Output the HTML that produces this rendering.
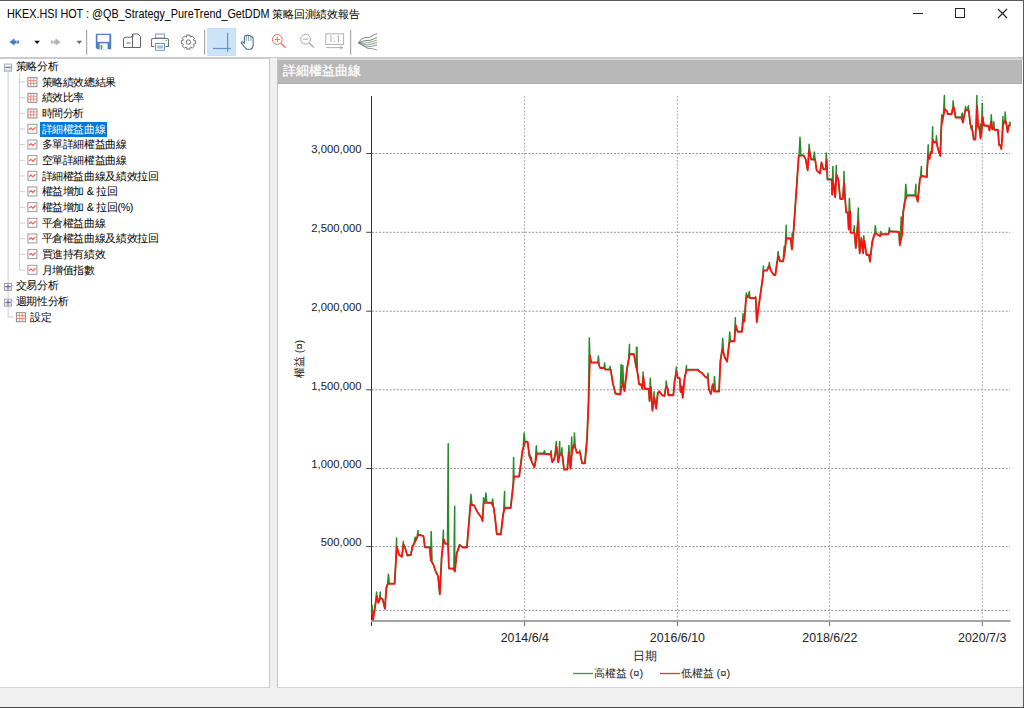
<!DOCTYPE html>
<html><head><meta charset="utf-8">
<style>
*{margin:0;padding:0;box-sizing:border-box}
html,body{width:1024px;height:708px;overflow:hidden;background:#fff;font-family:"Liberation Sans",sans-serif;color:#000}
.a{position:absolute}
#win{position:absolute;left:0;top:0;width:1024px;height:708px;background:#fff}
.title{left:7px;top:6.5px;font-size:12px;line-height:14px;white-space:nowrap;transform-origin:0 0;transform:scaleX(0.9);color:#000}
.tree{left:0;top:58px;width:270px;height:630px;border-right:1px solid #c8c8c8;background:#fff}
.ti{position:absolute;font-size:10.7px;letter-spacing:-0.35px;line-height:14px;white-space:nowrap;color:#000}
.sel{background:#0078d7;color:#fff;padding:0 1px}
.vl{position:absolute;width:0;border-left:1px dotted #a0a0a0}
.hl{position:absolute;height:0;border-top:1px dotted #a0a0a0}
.box{position:absolute;width:9px;height:9px;border:1px solid #9a9a9a;background:linear-gradient(#fff,#e0e0e0)}
.sep{position:absolute;width:1px;background:#a0a0a0}
.lbl{font-size:11.3px;line-height:14px;color:#222;white-space:nowrap;text-align:right}
.xlbl{font-size:12.4px;line-height:14px;color:#222;text-align:center;white-space:nowrap}
</style></head><body>
<div id="win">
<div class="a title">HKEX.HSI HOT : @QB_Strategy_PureTrend_GetDDM </div><div class="a" style="left:272px;top:6.5px;font-size:11px;line-height:14px;white-space:nowrap">策略回測績效報告</div>
<!-- window buttons -->
<svg class="a" style="left:0;top:0" width="1024" height="30">
<line x1="913" y1="13.5" x2="923" y2="13.5" stroke="#222" stroke-width="1"/>
<rect x="955.5" y="8.5" width="9" height="9" fill="none" stroke="#222" stroke-width="1"/>
<path d="M998 9 L1007 18 M1007 9 L998 18" stroke="#222" stroke-width="1.1"/>
</svg>

<!-- toolbar -->
<svg class="a" style="left:0;top:26px" width="400" height="32" viewBox="0 26 400 32">
<path d="M9.5 42 L14.5 38.3 L14.5 45.7 Z" fill="#4a7cc4"/>
<rect x="14" y="40.6" width="2.6" height="3" fill="#4a7cc4"/>
<rect x="17.2" y="40.6" width="1.8" height="3" fill="#4a7cc4"/>
<path d="M34.2 40.8 L40 40.8 L37.1 44 Z" fill="#111"/>
<rect x="51" y="40.6" width="1.8" height="3" fill="#b4b4b4"/>
<rect x="53.4" y="40.6" width="2.6" height="3" fill="#b4b4b4"/>
<path d="M60.6 42 L55.6 38.3 L55.6 45.7 Z" fill="#b4b4b4"/>
<path d="M76.4 40.8 L82.2 40.8 L79.3 44 Z" fill="#6a6a6a"/>
<rect x="86" y="29.8" width="1.2" height="25" fill="#a8a8a8"/>
<!-- save -->
<path d="M95.8 33.8 H111.2 V49.2 H97.3 L95.8 47.7 Z" fill="#4e7fc0"/>
<rect x="97.4" y="35" width="11.9" height="6.8" fill="#fff"/>
<rect x="99.6" y="43.4" width="8" height="5.8" fill="#fff"/>
<rect x="100.6" y="45" width="1.6" height="4.2" fill="#4e7fc0"/>
<!-- scanner/copy -->
<path d="M123.5 47.5 V39.5 Q123.5 37.2 126 37.2 H131.5 L132 36 H134" fill="none" stroke="#666" stroke-width="1"/>
<path d="M123.5 47.5 H140.5 V36.5 L138 34 H132.5 V47" fill="none" stroke="#666" stroke-width="1"/>
<rect x="126.5" y="42.5" width="4" height="1" fill="#666"/>
<!-- printer -->
<rect x="155.5" y="34" width="9" height="4" fill="none" stroke="#6b95cc" stroke-width="1"/>
<path d="M154.5 46.5 H151.5 V40 Q151.5 38.5 153 38.5 H167 Q168.5 38.5 168.5 40 V46.5 H165.5" fill="none" stroke="#707070" stroke-width="1.1"/>
<rect x="155.5" y="43.5" width="9" height="6.8" fill="#fff" stroke="#6b95cc" stroke-width="1"/>
<rect x="157" y="45.5" width="6" height="3" fill="#a8c0e0"/>
<rect x="165.5" y="40" width="1.2" height="1.2" fill="#3cb050"/>
<!-- gear -->
<g transform="translate(188.4,42.1)" fill="none" stroke="#707070" stroke-width="1">
<path d="M-1.90 -5.05 L-1.57 -7.03 L1.57 -7.03 L1.90 -5.05 L2.23 -4.92 L3.86 -6.08 L6.08 -3.86 L4.92 -2.23 L5.05 -1.90 L7.03 -1.57 L7.03 1.57 L5.05 1.90 L4.92 2.23 L6.08 3.86 L3.86 6.08 L2.23 4.92 L1.90 5.05 L1.57 7.03 L-1.57 7.03 L-1.90 5.05 L-2.23 4.92 L-3.86 6.08 L-6.08 3.86 L-4.92 2.23 L-5.05 1.90 L-7.03 1.57 L-7.03 -1.57 L-5.05 -1.90 L-4.92 -2.23 L-6.08 -3.86 L-3.86 -6.08 L-2.23 -4.92 Z"/>
<circle cx="0" cy="0" r="2.2"/>
</g>
<rect x="204" y="29.7" width="1.2" height="25" fill="#a8a8a8"/>
<!-- selected crosshair -->
<rect x="207.5" y="28.2" width="28.2" height="27.4" fill="#cce4f7" stroke="#b3d7f3" stroke-width="0.6"/>
<rect x="227" y="32.8" width="1.2" height="19" fill="#6890c8"/>
<rect x="213" y="47.9" width="18" height="1.2" fill="#6890c8"/>
<!-- hand -->
<path d="M244.5 47 L241.5 43.2 Q241 42 242.3 41.8 L244.4 43.2 V37.3 Q244.5 35.3 246.2 35.5 V35.5 Q247.8 34.8 248.6 35.6 Q250.3 35.2 250.8 36.6 Q252.6 36.4 253 38 L253.2 44.5 Q253.2 48.2 251 49.2 H246.5 Z" fill="#fff" stroke="#4e6e86" stroke-width="1.1"/>
<path d="M246.3 36 V41 M248.6 35.8 V41 M250.9 36.8 V41" stroke="#6a8aa0" stroke-width="0.8"/>
<!-- zoom + -->
<circle cx="277.3" cy="39.4" r="4.9" fill="none" stroke="#e8705c" stroke-width="1"/>
<path d="M274.6 39.4 H280 M277.3 36.7 V42.1" stroke="#e8705c" stroke-width="1"/>
<path d="M280.8 43 L285.6 47.8" stroke="#e8705c" stroke-width="1.3"/>
<!-- zoom - -->
<circle cx="305.6" cy="39.2" r="4.9" fill="none" stroke="#aaaaaa" stroke-width="1"/>
<path d="M302.9 39.2 H308.3" stroke="#aaaaaa" stroke-width="1"/>
<path d="M309.1 42.8 L313.8 47.5" stroke="#aaaaaa" stroke-width="1.3"/>
<!-- 1:1 -->
<rect x="325.8" y="33.8" width="17.8" height="10.6" fill="none" stroke="#b0b0b0" stroke-width="1"/>
<path d="M330 36.3 L331 35.8 V42.2 M337.5 36.3 L338.5 35.8 V42.2" fill="none" stroke="#b0b0b0" stroke-width="1"/>
<rect x="333.8" y="37.5" width="1" height="1" fill="#b0b0b0"/><rect x="333.8" y="41" width="1" height="1" fill="#b0b0b0"/>
<path d="M326 47.6 H342.5 M340.2 46.3 L342.8 47.6 L340.2 48.8" fill="none" stroke="#a8a8a8" stroke-width="0.9"/>
<rect x="350" y="29.7" width="1.2" height="25" fill="#a8a8a8"/>
<!-- chart icon -->
<g fill="none" stroke-width="0.8">
<path d="M358.5 43 Q361 38 365 37.5 Q369 38.5 372 36 Q374 34.5 377 33.7" stroke="#606060"/>
<path d="M358.5 43 Q362 41 366 40.5 Q370 41 373.5 39 L377 37.5" stroke="#606060"/>
<path d="M358.5 43 Q362 42.5 366 43 Q371 42.5 377 40" stroke="#4caf50"/>
<path d="M358.5 43 Q363 44 367 45 Q372 44 377 42.5" stroke="#707070"/>
<path d="M358.5 43 Q363 45.5 367 47 Q371 46.5 377 45" stroke="#707070"/>
<path d="M358.5 43 Q363 46 368 48.5 Q373 48 377 50" stroke="#808080"/>
</g>
</svg>
<!-- right panel -->
<div class="a" style="left:277px;top:58px;width:746px;height:630px;background:#fff;border-left:1px solid #c4c4c4;border-top:2px solid #dadada"></div>
<div class="a" style="left:278px;top:60px;width:744px;height:23.8px;background:#b8b8b8;border-bottom:1px solid #adadad;border-right:1px solid #a8a8a8"></div>
<div class="a" style="left:282.5px;top:62px;font-size:13.4px;line-height:18px;color:#fff;font-weight:normal;-webkit-text-stroke:0.3px #fff;white-space:nowrap">詳細權益曲線</div>
<div class="a" style="left:0;top:687px;width:1023px;height:20px;background:#f0f0f0;border-top:1px solid #d4d4d4"></div>
<svg class="a" style="left:0;top:0" width="1024" height="708">
<line x1="372" y1="153.5" x2="1010" y2="153.5" stroke="#909090" stroke-width="1" stroke-dasharray="1.9 1.66"/>
<line x1="372" y1="232.3" x2="1010" y2="232.3" stroke="#909090" stroke-width="1" stroke-dasharray="1.9 1.66"/>
<line x1="372" y1="311.2" x2="1010" y2="311.2" stroke="#909090" stroke-width="1" stroke-dasharray="1.9 1.66"/>
<line x1="372" y1="389.8" x2="1010" y2="389.8" stroke="#909090" stroke-width="1" stroke-dasharray="1.9 1.66"/>
<line x1="372" y1="468.5" x2="1010" y2="468.5" stroke="#909090" stroke-width="1" stroke-dasharray="1.9 1.66"/>
<line x1="372" y1="546.6" x2="1010" y2="546.6" stroke="#909090" stroke-width="1" stroke-dasharray="1.9 1.66"/>
<line x1="372" y1="610.4" x2="1010" y2="610.4" stroke="#909090" stroke-width="1" stroke-dasharray="1.9 1.66"/>
<line x1="524.6" y1="96" x2="524.6" y2="620" stroke="#a8a8a8" stroke-width="1" stroke-dasharray="1.9 1.66"/>
<line x1="524.6" y1="621" x2="524.6" y2="626" stroke="#666" stroke-width="1"/>
<line x1="677.4" y1="96" x2="677.4" y2="620" stroke="#a8a8a8" stroke-width="1" stroke-dasharray="1.9 1.66"/>
<line x1="677.4" y1="621" x2="677.4" y2="626" stroke="#666" stroke-width="1"/>
<line x1="829.6" y1="96" x2="829.6" y2="620" stroke="#a8a8a8" stroke-width="1" stroke-dasharray="1.9 1.66"/>
<line x1="829.6" y1="621" x2="829.6" y2="626" stroke="#666" stroke-width="1"/>
<line x1="982.3" y1="96" x2="982.3" y2="620" stroke="#a8a8a8" stroke-width="1" stroke-dasharray="1.9 1.66"/>
<line x1="982.3" y1="621" x2="982.3" y2="626" stroke="#666" stroke-width="1"/>
<line x1="366.2" y1="153.5" x2="372" y2="153.5" stroke="#444" stroke-width="1"/>
<line x1="366.2" y1="232.3" x2="372" y2="232.3" stroke="#444" stroke-width="1"/>
<line x1="366.2" y1="311.2" x2="372" y2="311.2" stroke="#444" stroke-width="1"/>
<line x1="366.2" y1="389.8" x2="372" y2="389.8" stroke="#444" stroke-width="1"/>
<line x1="366.2" y1="468.5" x2="372" y2="468.5" stroke="#444" stroke-width="1"/>
<line x1="366.2" y1="546.6" x2="372" y2="546.6" stroke="#444" stroke-width="1"/>
<line x1="371.5" y1="96" x2="371.5" y2="626" stroke="#333" stroke-width="1"/>
<line x1="371" y1="621" x2="1010.5" y2="621" stroke="#a4a4a4" stroke-width="1.8"/>
<!--CURVE-->
<path d="M371.50 612.0 L371.70 612.0 L372.40 606.0 L373.20 620.0 L373.30 619.3 L376.00 601.6 L376.90 592.7 L376.90 595.7 L377.80 600.1 L378.40 603.0 L379.70 600.0 L380.60 592.7 L380.60 598.0 L381.50 598.6 L382.80 599.4 L385.00 609.0 L386.50 588.0 L387.80 584.4 L388.00 583.8 L388.70 574.9 L389.60 583.8 L394.70 584.0 L396.00 562.0 L396.90 538.5 L396.90 546.7 L397.80 550.1 L399.10 554.9 L402.00 557.0 L402.70 551.5 L403.60 542.0 L403.60 544.5 L404.50 546.6 L405.80 549.7 L407.30 555.6 L411.00 555.0 L412.40 547.4 L414.50 543.3 L415.40 537.8 L415.40 541.5 L416.30 539.5 L417.50 536.8 L418.40 531.0 L418.40 534.8 L419.30 535.1 L423.60 536.3 L425.00 547.4 L429.80 547.6 L430.60 556.5 L431.00 560.9 L431.50 532.2 L432.40 563.0 L433.40 564.5 L435.80 571.7 L438.20 576.5 L439.90 594.5 L441.80 557.3 L442.80 547.8 L443.70 530.8 L443.70 539.2 L444.60 541.7 L445.40 544.0 L447.60 544.0 L447.80 544.0 L448.50 444.4 L449.00 568.8 L449.40 568.8 L453.30 568.8 L454.10 570.2 L455.00 506.8 L455.00 571.7 L455.90 563.1 L456.90 553.6 L459.80 545.2 L462.90 547.6 L467.00 547.6 L470.40 506.8 L470.60 504.4 L471.30 494.8 L472.20 504.9 L474.20 505.6 L477.80 512.8 L481.40 517.6 L482.60 521.2 L482.90 516.2 L483.70 503.0 L483.80 498.4 L484.70 503.0 L485.30 503.0 L486.20 493.7 L487.10 503.0 L491.30 503.0 L492.10 504.6 L493.00 499.7 L493.90 508.1 L493.90 508.1 L495.60 521.7 L496.90 534.4 L501.00 534.4 L503.20 514.9 L504.00 511.7 L504.90 492.0 L504.90 508.1 L505.80 508.1 L510.80 508.1 L513.00 488.0 L513.40 484.4 L513.90 458.1 L514.20 476.8 L514.80 476.8 L519.30 476.8 L522.70 450.5 L523.50 447.8 L524.40 433.6 L525.20 442.0 L525.30 442.0 L527.80 442.0 L529.30 454.7 L529.50 456.4 L530.20 454.7 L530.80 459.5 L531.10 460.2 L531.70 457.8 L532.00 462.4 L532.60 463.6 L534.50 467.5 L535.70 461.2 L536.60 446.3 L537.10 453.9 L537.50 453.9 L543.80 453.9 L543.90 453.9 L544.70 451.4 L545.60 454.1 L550.60 454.7 L550.60 454.7 L551.50 451.4 L552.30 462.4 L552.40 462.2 L554.50 459.0 L555.70 451.7 L556.60 442.0 L556.60 446.3 L557.50 454.8 L558.30 462.4 L559.10 458.4 L560.00 442.0 L560.00 453.9 L560.90 454.7 L561.30 455.0 L562.20 448.4 L562.50 456.1 L563.10 460.9 L564.20 469.8 L567.40 469.8 L568.30 459.7 L568.90 452.9 L569.20 446.0 L570.10 464.1 L570.60 468.8 L571.10 463.5 L572.00 437.5 L572.30 450.8 L572.90 449.0 L573.80 446.2 L574.40 444.4 L574.70 433.6 L575.60 448.5 L576.90 452.9 L579.30 452.9 L580.10 452.9 L580.20 450.8 L581.10 457.9 L582.20 463.5 L585.00 463.5 L585.50 458.0 L586.40 446.9 L587.10 440.2 L587.30 435.4 L588.60 404.2 L588.70 400.9 L589.60 338.5 L590.10 355.4 L590.50 357.9 L591.30 362.8 L597.80 362.8 L598.10 362.8 L598.70 356.5 L599.60 366.6 L600.20 368.1 L604.00 368.1 L604.40 368.1 L604.90 363.5 L605.50 369.8 L605.80 369.8 L609.50 369.8 L610.40 367.1 L610.80 369.8 L611.30 372.9 L612.90 383.0 L615.40 393.6 L620.30 394.6 L620.50 393.5 L621.40 365.0 L622.20 384.1 L622.30 383.6 L622.40 383.0 L623.10 366.0 L624.00 389.1 L624.60 391.4 L627.30 368.1 L628.90 359.3 L629.80 344.8 L629.80 354.4 L630.70 354.4 L634.10 354.4 L635.90 365.3 L636.20 367.1 L636.40 368.0 L636.80 348.0 L637.30 347.8 L637.70 373.6 L637.90 374.5 L638.20 376.8 L639.20 384.6 L641.10 384.6 L642.40 389.1 L642.50 387.8 L643.40 372.6 L643.40 376.4 L644.30 384.0 L644.90 389.1 L648.70 389.1 L649.70 401.2 L649.70 401.2 L650.60 378.9 L651.00 387.2 L651.50 395.0 L652.50 410.7 L653.50 403.6 L654.40 392.3 L654.40 397.3 L655.30 402.7 L656.30 408.8 L657.90 393.5 L659.50 391.6 L662.00 395.4 L664.60 396.1 L665.60 390.1 L666.20 386.5 L666.50 381.5 L667.40 388.0 L667.80 388.5 L668.40 395.4 L673.50 395.4 L674.80 380.8 L675.80 376.1 L676.70 367.5 L676.70 371.9 L677.60 376.7 L677.90 378.3 L679.80 378.3 L680.70 392.3 L682.00 386.5 L682.80 398.0 L684.90 377.0 L685.90 373.3 L686.80 366.2 L686.80 370.0 L687.70 370.0 L698.30 370.0 L699.50 371.9 L702.10 373.2 L705.30 377.0 L707.50 378.1 L707.80 378.3 L708.40 373.8 L709.00 389.7 L709.30 390.4 L711.00 394.2 L712.90 384.6 L713.90 390.4 L714.10 391.6 L714.80 377.0 L715.70 391.6 L719.20 391.6 L720.50 361.8 L722.10 351.1 L722.40 349.1 L723.00 338.9 L723.90 354.2 L725.00 358.0 L727.20 361.8 L729.10 345.3 L729.40 342.7 L730.00 332.5 L730.70 341.4 L730.90 341.4 L734.50 341.4 L734.80 337.3 L735.70 318.3 L735.70 325.1 L736.60 328.2 L737.70 331.9 L742.10 331.9 L742.40 328.9 L743.30 314.1 L743.30 320.0 L744.20 321.3 L744.50 321.7 L745.80 303.6 L746.20 298.0 L746.70 293.7 L747.60 296.9 L748.40 296.3 L748.70 296.7 L749.60 292.0 L750.10 298.3 L750.50 298.3 L755.10 298.3 L755.70 298.3 L756.00 297.1 L756.90 322.5 L756.90 322.5 L758.60 308.1 L762.00 284.4 L762.80 278.0 L763.70 266.6 L763.70 270.8 L764.60 270.8 L767.00 270.8 L768.70 267.1 L769.30 265.8 L769.60 263.2 L770.50 269.6 L770.90 270.8 L773.80 275.1 L775.50 275.1 L777.20 262.4 L777.50 261.3 L778.40 252.2 L778.90 256.4 L779.30 258.1 L780.10 261.5 L783.20 261.5 L783.60 259.2 L784.50 247.1 L784.80 252.2 L785.40 247.4 L785.60 245.8 L786.50 225.9 L786.50 238.6 L787.40 238.6 L790.80 238.6 L791.60 246.0 L792.00 249.7 L792.50 233.6 L793.30 237.0 L793.40 235.5 L795.90 199.2 L798.90 155.7 L799.40 155.7 L800.30 137.9 L801.20 155.7 L803.80 155.7 L805.80 159.6 L807.80 170.5 L808.50 160.2 L809.20 149.8 L809.40 144.8 L810.30 154.9 L811.30 159.6 L813.80 159.6 L814.70 152.7 L815.30 159.6 L815.60 161.9 L816.70 170.5 L820.00 173.7 L821.70 162.7 L823.40 169.5 L825.70 169.5 L825.90 169.5 L826.60 153.7 L826.80 159.3 L827.50 177.1 L827.60 179.7 L831.90 179.7 L832.20 194.9 L832.30 194.0 L833.20 167.0 L833.60 183.0 L834.10 187.3 L835.30 197.5 L835.70 190.5 L836.60 166.1 L836.60 174.6 L837.50 177.3 L838.60 180.5 L840.30 199.2 L842.90 199.2 L843.30 193.8 L844.10 183.0 L844.20 172.0 L845.10 196.7 L845.40 200.8 L846.30 212.7 L848.00 212.7 L848.80 229.7 L848.80 229.7 L849.70 199.2 L850.20 211.0 L850.60 225.7 L850.80 233.0 L853.80 233.0 L854.70 226.3 L854.70 233.0 L855.60 244.5 L855.90 248.3 L857.70 226.1 L858.10 221.2 L858.60 208.5 L859.50 247.7 L859.80 253.4 L861.50 238.1 L863.20 253.4 L863.20 253.4 L864.10 236.4 L864.40 240.7 L865.00 244.6 L866.60 255.1 L869.20 255.1 L870.00 261.9 L872.50 241.5 L874.70 234.3 L875.10 233.0 L875.60 226.3 L876.50 234.0 L877.60 234.7 L880.00 236.4 L880.10 236.3 L881.00 232.2 L881.30 234.5 L881.90 234.5 L888.30 234.5 L888.90 233.3 L889.80 228.3 L889.80 231.4 L890.70 231.5 L899.10 232.2 L899.90 245.4 L900.60 242.2 L901.50 217.5 L902.30 234.5 L902.40 232.3 L903.30 212.8 L904.90 201.9 L905.20 201.0 L906.10 184.8 L906.90 195.7 L907.00 195.7 L915.30 195.7 L916.20 184.8 L916.20 195.7 L917.10 199.2 L917.80 201.9 L920.10 178.6 L920.80 177.6 L921.70 167.0 L921.70 176.3 L922.60 176.4 L927.10 177.1 L927.20 169.1 L927.60 164.9 L928.50 145.4 L928.50 155.5 L929.40 158.0 L929.70 158.9 L930.80 152.1 L931.90 153.3 L932.10 150.8 L933.00 127.3 L933.00 139.7 L933.90 141.8 L934.20 142.5 L935.80 142.5 L936.40 142.5 L936.70 136.3 L937.60 146.9 L938.10 148.8 L939.30 153.3 L940.40 156.1 L941.20 134.4 L941.50 126.2 L942.10 115.4 L942.70 119.9 L943.00 118.4 L943.80 114.5 L944.70 96.2 L944.90 109.2 L945.60 109.9 L947.20 111.5 L947.80 114.3 L951.70 114.3 L952.50 110.7 L953.20 107.5 L953.40 101.3 L954.00 107.5 L954.30 109.3 L955.70 117.7 L961.30 117.7 L961.60 118.6 L962.50 113.7 L963.00 122.8 L963.40 120.7 L965.00 112.5 L965.30 110.9 L965.90 107.0 L966.40 110.3 L966.80 110.4 L967.80 110.6 L968.70 106.4 L969.00 110.9 L969.60 117.1 L970.20 123.3 L971.50 129.0 L971.70 129.3 L972.60 126.2 L972.60 130.7 L973.50 137.5 L973.80 139.7 L975.50 139.7 L976.30 123.7 L977.20 96.2 L977.20 105.8 L978.10 123.4 L978.30 127.3 L979.40 128.4 L979.70 131.0 L980.60 124.5 L980.60 138.6 L981.50 133.5 L981.70 132.4 L981.70 132.4 L982.60 104.1 L982.80 117.1 L983.50 122.1 L984.00 125.6 L988.50 126.2 L989.60 130.7 L990.70 124.8 L991.30 121.6 L991.60 115.4 L992.40 129.5 L992.50 129.4 L993.20 128.8 L993.60 128.4 L994.10 122.3 L994.70 130.1 L995.00 130.1 L998.10 130.1 L999.20 145.4 L1000.40 145.4 L1001.50 149.3 L1002.30 137.9 L1003.20 117.1 L1003.20 125.0 L1004.10 123.0 L1004.50 122.1 L1005.20 120.5 L1005.40 112.6 L1006.30 124.0 L1006.60 125.0 L1007.70 132.4 L1008.60 126.7 L1009.30 126.1 L1010.20 122.8 L1010.50 125.0 L1011.10 125.0" fill="none" stroke="#2a8a2a" stroke-width="1.5" stroke-linejoin="round" transform="translate(-0.3,-0.6)"/>
<path d="M371.70 612.0 L373.20 620.0 L376.90 595.7 L378.40 603.0 L380.60 598.0 L382.80 599.4 L385.00 609.0 L386.50 588.0 L388.00 583.8 L394.70 584.0 L396.90 546.7 L399.10 554.9 L402.00 557.0 L403.60 544.5 L405.80 549.7 L407.30 555.6 L411.00 555.0 L412.40 547.4 L415.40 541.5 L418.40 534.8 L423.60 536.3 L425.00 547.4 L429.80 547.6 L431.00 560.9 L433.40 564.5 L435.80 571.7 L438.20 576.5 L439.90 594.5 L441.80 557.3 L443.70 539.2 L445.40 544.0 L447.80 544.0 L449.00 568.8 L453.30 568.8 L455.00 571.7 L456.90 553.6 L459.80 545.2 L462.90 547.6 L467.00 547.6 L470.60 504.4 L474.20 505.6 L477.80 512.8 L481.40 517.6 L482.60 521.2 L483.70 503.0 L491.30 503.0 L493.90 508.1 L495.60 521.7 L496.90 534.4 L501.00 534.4 L503.20 514.9 L504.90 508.1 L510.80 508.1 L513.40 484.4 L514.20 476.8 L519.30 476.8 L522.70 450.5 L525.20 442.0 L527.80 442.0 L529.50 456.4 L532.00 462.4 L534.50 467.5 L537.10 453.9 L543.90 453.9 L550.60 454.7 L552.30 462.4 L554.50 459.0 L556.60 446.3 L558.30 462.4 L560.00 453.9 L562.50 456.1 L564.20 469.8 L567.40 469.8 L568.90 452.9 L570.60 468.8 L572.30 450.8 L574.40 444.4 L576.90 452.9 L580.10 452.9 L582.20 463.5 L585.00 463.5 L587.10 440.2 L588.60 404.2 L590.10 355.4 L591.30 362.8 L598.10 362.8 L600.20 368.1 L604.40 368.1 L605.50 369.8 L610.80 369.8 L612.90 383.0 L615.40 393.6 L620.30 394.6 L622.40 383.0 L624.60 391.4 L627.30 368.1 L629.80 354.4 L634.10 354.4 L636.20 367.1 L637.90 374.5 L639.20 384.6 L641.10 384.6 L642.40 389.1 L643.40 376.4 L644.90 389.1 L648.70 389.1 L649.70 401.2 L651.00 387.2 L652.50 410.7 L654.40 397.3 L656.30 408.8 L657.90 393.5 L659.50 391.6 L662.00 395.4 L664.60 396.1 L666.20 386.5 L667.80 388.5 L668.40 395.4 L673.50 395.4 L674.80 380.8 L676.70 371.9 L677.90 378.3 L679.80 378.3 L680.70 392.3 L682.00 386.5 L682.80 398.0 L684.90 377.0 L686.80 370.0 L698.30 370.0 L699.50 371.9 L702.10 373.2 L705.30 377.0 L707.80 378.3 L709.00 389.7 L711.00 394.2 L712.90 384.6 L714.10 391.6 L719.20 391.6 L720.50 361.8 L722.40 349.1 L725.00 358.0 L727.20 361.8 L729.40 342.7 L730.70 341.4 L734.50 341.4 L735.70 325.1 L737.70 331.9 L742.10 331.9 L743.30 320.0 L744.50 321.7 L746.20 298.0 L748.40 296.3 L750.10 298.3 L755.70 298.3 L756.90 322.5 L758.60 308.1 L762.00 284.4 L763.70 270.8 L767.00 270.8 L769.30 265.8 L770.90 270.8 L773.80 275.1 L775.50 275.1 L777.20 262.4 L778.90 256.4 L780.10 261.5 L783.20 261.5 L784.80 252.2 L786.50 238.6 L790.80 238.6 L792.00 249.7 L793.30 237.0 L795.90 199.2 L798.90 155.7 L803.80 155.7 L805.80 159.6 L807.80 170.5 L809.20 149.8 L811.30 159.6 L815.30 159.6 L816.70 170.5 L820.00 173.7 L821.70 162.7 L823.40 169.5 L825.90 169.5 L826.80 159.3 L827.60 179.7 L831.90 179.7 L832.20 194.9 L833.60 183.0 L835.30 197.5 L836.60 174.6 L838.60 180.5 L840.30 199.2 L842.90 199.2 L844.10 183.0 L845.40 200.8 L846.30 212.7 L848.00 212.7 L848.80 229.7 L850.20 211.0 L850.80 233.0 L854.70 233.0 L855.90 248.3 L858.10 221.2 L859.80 253.4 L861.50 238.1 L863.20 253.4 L864.40 240.7 L866.60 255.1 L869.20 255.1 L870.00 261.9 L872.50 241.5 L875.10 233.0 L877.60 234.7 L880.00 236.4 L881.30 234.5 L888.30 234.5 L889.80 231.4 L899.10 232.2 L899.90 245.4 L902.30 234.5 L903.30 212.8 L904.90 201.9 L906.90 195.7 L916.20 195.7 L917.80 201.9 L920.10 178.6 L921.70 176.3 L927.10 177.1 L927.20 169.1 L928.50 155.5 L929.70 158.9 L930.80 152.1 L931.90 153.3 L933.00 139.7 L934.20 142.5 L936.40 142.5 L938.10 148.8 L939.30 153.3 L940.40 156.1 L941.50 126.2 L942.70 119.9 L944.90 109.2 L947.20 111.5 L947.80 114.3 L951.70 114.3 L953.20 107.5 L954.00 107.5 L955.70 117.7 L961.30 117.7 L963.00 122.8 L965.30 110.9 L966.40 110.3 L969.00 110.9 L970.20 123.3 L971.50 129.0 L972.60 130.7 L973.80 139.7 L975.50 139.7 L977.20 105.8 L978.30 127.3 L979.40 128.4 L980.60 138.6 L981.70 132.4 L982.80 117.1 L984.00 125.6 L988.50 126.2 L989.60 130.7 L991.30 121.6 L992.40 129.5 L993.60 128.4 L994.70 130.1 L998.10 130.1 L999.20 145.4 L1000.40 145.4 L1001.50 149.3 L1003.20 125.0 L1005.20 120.5 L1006.60 125.0 L1007.70 132.4 L1008.60 126.7 L1010.50 125.0" fill="none" stroke="#ff1010" stroke-width="1.6" stroke-linejoin="round"/>
</svg>
<div class="a lbl" style="right:662.5px;top:142.3px">3,000,000</div>
<div class="a lbl" style="right:662.5px;top:221.1px">2,500,000</div>
<div class="a lbl" style="right:662.5px;top:300.0px">2,000,000</div>
<div class="a lbl" style="right:662.5px;top:378.6px">1,500,000</div>
<div class="a lbl" style="right:662.5px;top:457.3px">1,000,000</div>
<div class="a lbl" style="right:662.5px;top:535.4px">500,000</div>
<div class="a xlbl" style="left:484.79999999999995px;width:80px;top:630.8px">2014/6/4</div>
<div class="a xlbl" style="left:637.4px;width:80px;top:630.8px">2016/6/10</div>
<div class="a xlbl" style="left:789.8px;width:80px;top:630.8px">2018/6/22</div>
<div class="a xlbl" style="left:942.2px;width:80px;top:630.8px">2020/7/3</div>
<div class="a" style="left:278.7px;top:351.7px;width:40px;height:14px;transform-origin:center;transform:rotate(-90deg);font-size:11px;line-height:14px;text-align:center;color:#222;white-space:nowrap">權益 (¤)</div>
<div class="a" style="left:600px;top:649px;width:90px;text-align:center;font-size:11.5px;line-height:14px;color:#222">日期</div>
<svg class="a" style="left:0;top:0" width="1024" height="708"><line x1="573" y1="673.5" x2="593" y2="673.5" stroke="#3c9a3c" stroke-width="1.3"/><line x1="660" y1="673.5" x2="680" y2="673.5" stroke="#ee3030" stroke-width="1.3"/></svg>
<div class="a" style="left:593.5px;top:666px;font-size:11.1px;line-height:14px;color:#222;white-space:nowrap">高權益 (¤)</div>
<div class="a" style="left:680.5px;top:666px;font-size:11.1px;line-height:14px;color:#222;white-space:nowrap">低權益 (¤)</div>
<!-- tree -->
<div class="a" style="left:0;top:57px;width:1023px;height:2px;background:#cacbce"></div>
<div class="a" style="left:269px;top:58px;width:1px;height:630px;background:#c9c9c9"></div>
<div class="a" style="left:270px;top:58px;width:7px;height:630px;background:#f0f0f0"></div>
<svg class="a" style="left:0;top:0" width="269" height="330"><defs><linearGradient id="bg" x1="0" y1="0" x2="0" y2="1"><stop offset="0" stop-color="#ffffff"/><stop offset="0.45" stop-color="#ffffff"/><stop offset="0.55" stop-color="#e9e9e9"/><stop offset="1" stop-color="#e6e6e6"/></linearGradient></defs><rect x="7.6" y="72" width="1" height="245.0" fill="#d0d0d0"/><rect x="7.6" y="316.5" width="6" height="1" fill="#d0d0d0"/><rect x="19" y="73.5" width="1" height="196.5" fill="#d0d0d0"/><rect x="4.40" y="64.10" width="7" height="7" fill="url(#bg)" stroke="#a4a4a4" stroke-width="1"/><rect x="5.20" y="66.70" width="5.6" height="1.1" fill="#5068b8"/><rect x="12" y="65.8" width="1.8" height="1" fill="#d0d0d0"/><rect x="19" y="81.5" width="6" height="1" fill="#d0d0d0"/><rect x="27.90" y="77.67" width="9" height="9" fill="#fff" stroke="#8a8a8a" stroke-width="1"/><rect x="30.30" y="78.17" width="1" height="8" fill="#f08a78"/><rect x="28.40" y="80.07" width="8" height="1" fill="#f08a78"/><rect x="33.20" y="78.17" width="1" height="8" fill="#f08a78"/><rect x="28.40" y="82.97" width="8" height="1" fill="#f08a78"/><rect x="19" y="97.1" width="6" height="1" fill="#d0d0d0"/><rect x="27.90" y="93.34" width="9" height="9" fill="#fff" stroke="#8a8a8a" stroke-width="1"/><rect x="30.30" y="93.84" width="1" height="8" fill="#f08a78"/><rect x="28.40" y="95.74" width="8" height="1" fill="#f08a78"/><rect x="33.20" y="93.84" width="1" height="8" fill="#f08a78"/><rect x="28.40" y="98.64" width="8" height="1" fill="#f08a78"/><rect x="19" y="112.8" width="6" height="1" fill="#d0d0d0"/><rect x="27.90" y="109.01" width="9" height="9" fill="#fff" stroke="#8a8a8a" stroke-width="1"/><rect x="30.30" y="109.51" width="1" height="8" fill="#f08a78"/><rect x="28.40" y="111.41" width="8" height="1" fill="#f08a78"/><rect x="33.20" y="109.51" width="1" height="8" fill="#f08a78"/><rect x="28.40" y="114.31" width="8" height="1" fill="#f08a78"/><rect x="19" y="128.5" width="6" height="1" fill="#d0d0d0"/><rect x="27.90" y="124.28" width="9" height="9" fill="#fff" stroke="#9a9a9a" stroke-width="1"/><path d="M29.00 129.78 L31.00 127.98 L32.80 129.88 L35.60 127.18" fill="none" stroke="#ee6a55" stroke-width="1.3"/><rect x="19" y="144.1" width="6" height="1" fill="#d0d0d0"/><rect x="27.90" y="139.95" width="9" height="9" fill="#fff" stroke="#9a9a9a" stroke-width="1"/><path d="M29.00 145.45 L31.00 143.65 L32.80 145.55 L35.60 142.85" fill="none" stroke="#ee6a55" stroke-width="1.3"/><rect x="19" y="159.8" width="6" height="1" fill="#d0d0d0"/><rect x="27.90" y="155.62" width="9" height="9" fill="#fff" stroke="#9a9a9a" stroke-width="1"/><path d="M29.00 161.12 L31.00 159.32 L32.80 161.22 L35.60 158.52" fill="none" stroke="#ee6a55" stroke-width="1.3"/><rect x="19" y="175.5" width="6" height="1" fill="#d0d0d0"/><rect x="27.90" y="171.29" width="9" height="9" fill="#fff" stroke="#9a9a9a" stroke-width="1"/><path d="M29.00 176.79 L31.00 174.99 L32.80 176.89 L35.60 174.19" fill="none" stroke="#ee6a55" stroke-width="1.3"/><rect x="19" y="191.2" width="6" height="1" fill="#d0d0d0"/><rect x="27.90" y="186.96" width="9" height="9" fill="#fff" stroke="#9a9a9a" stroke-width="1"/><path d="M29.00 192.46 L31.00 190.66 L32.80 192.56 L35.60 189.86" fill="none" stroke="#ee6a55" stroke-width="1.3"/><rect x="19" y="206.8" width="6" height="1" fill="#d0d0d0"/><rect x="27.90" y="202.63" width="9" height="9" fill="#fff" stroke="#9a9a9a" stroke-width="1"/><path d="M29.00 208.13 L31.00 206.33 L32.80 208.23 L35.60 205.53" fill="none" stroke="#ee6a55" stroke-width="1.3"/><rect x="19" y="222.5" width="6" height="1" fill="#d0d0d0"/><rect x="27.90" y="218.30" width="9" height="9" fill="#fff" stroke="#9a9a9a" stroke-width="1"/><path d="M29.00 223.80 L31.00 222.00 L32.80 223.90 L35.60 221.20" fill="none" stroke="#ee6a55" stroke-width="1.3"/><rect x="19" y="238.2" width="6" height="1" fill="#d0d0d0"/><rect x="27.90" y="233.97" width="9" height="9" fill="#fff" stroke="#9a9a9a" stroke-width="1"/><path d="M29.00 239.47 L31.00 237.67 L32.80 239.57 L35.60 236.87" fill="none" stroke="#ee6a55" stroke-width="1.3"/><rect x="19" y="253.8" width="6" height="1" fill="#d0d0d0"/><rect x="27.90" y="249.64" width="9" height="9" fill="#fff" stroke="#9a9a9a" stroke-width="1"/><path d="M29.00 255.14 L31.00 253.34 L32.80 255.24 L35.60 252.54" fill="none" stroke="#ee6a55" stroke-width="1.3"/><rect x="19" y="269.5" width="6" height="1" fill="#d0d0d0"/><rect x="27.90" y="265.31" width="9" height="9" fill="#fff" stroke="#9a9a9a" stroke-width="1"/><path d="M29.00 270.81 L31.00 269.01 L32.80 270.91 L35.60 268.21" fill="none" stroke="#ee6a55" stroke-width="1.3"/><rect x="4.40" y="283.48" width="7" height="7" fill="url(#bg)" stroke="#a4a4a4" stroke-width="1"/><rect x="5.20" y="286.08" width="5.6" height="1.1" fill="#5068b8"/><rect x="7.45" y="284.08" width="1.1" height="5.6" fill="#5068b8"/><rect x="12" y="285.2" width="1.8" height="1" fill="#d0d0d0"/><rect x="4.40" y="299.15" width="7" height="7" fill="url(#bg)" stroke="#a4a4a4" stroke-width="1"/><rect x="5.20" y="301.75" width="5.6" height="1.1" fill="#5068b8"/><rect x="7.45" y="299.75" width="1.1" height="5.6" fill="#5068b8"/><rect x="12" y="300.9" width="1.8" height="1" fill="#d0d0d0"/><rect x="16.40" y="312.72" width="9" height="9" fill="#fff" stroke="#8a8a8a" stroke-width="1"/><rect x="18.80" y="313.22" width="1" height="8" fill="#f08a78"/><rect x="16.90" y="315.12" width="8" height="1" fill="#f08a78"/><rect x="21.70" y="313.22" width="1" height="8" fill="#f08a78"/><rect x="16.90" y="318.02" width="8" height="1" fill="#f08a78"/></svg>
<div class="ti" style="left:15.7px;top:59.0px;line-height:15px">策略分析</div>
<div class="ti" style="left:41.5px;top:74.7px;line-height:15px">策略績效總結果</div>
<div class="ti" style="left:41.5px;top:90.3px;line-height:15px">績效比率</div>
<div class="ti" style="left:41.5px;top:106.0px;line-height:15px">時間分析</div>
<div class="ti sel" style="left:40px;top:121.7px;width:67px;height:15px;line-height:15px;padding-left:1.5px">詳細權益曲線</div>
<div class="ti" style="left:41.5px;top:137.3px;line-height:15px">多單詳細權益曲線</div>
<div class="ti" style="left:41.5px;top:153.0px;line-height:15px">空單詳細權益曲線</div>
<div class="ti" style="left:41.5px;top:168.7px;line-height:15px">詳細權益曲線及績效拉回</div>
<div class="ti" style="left:41.5px;top:184.4px;line-height:15px">權益增加 &amp; 拉回</div>
<div class="ti" style="left:41.5px;top:200.0px;line-height:15px">權益增加 &amp; 拉回(%)</div>
<div class="ti" style="left:41.5px;top:215.7px;line-height:15px">平倉權益曲線</div>
<div class="ti" style="left:41.5px;top:231.4px;line-height:15px">平倉權益曲線及績效拉回</div>
<div class="ti" style="left:41.5px;top:247.0px;line-height:15px">買進持有績效</div>
<div class="ti" style="left:41.5px;top:262.7px;line-height:15px">月增值指數</div>
<div class="ti" style="left:15.7px;top:278.4px;line-height:15px">交易分析</div>
<div class="ti" style="left:15.7px;top:294.1px;line-height:15px">週期性分析</div>
<div class="ti" style="left:30px;top:309.7px;line-height:15px">設定</div>
<div class="a" style="left:0;top:0;width:1024px;height:1px;background:#5a5a5a"></div><div class="a" style="left:1023px;top:0;width:1px;height:708px;background:#5a5a5a"></div><div class="a" style="left:0;top:707px;width:1024px;height:1px;background:#4a4a4a"></div>
</div>
</body></html>
